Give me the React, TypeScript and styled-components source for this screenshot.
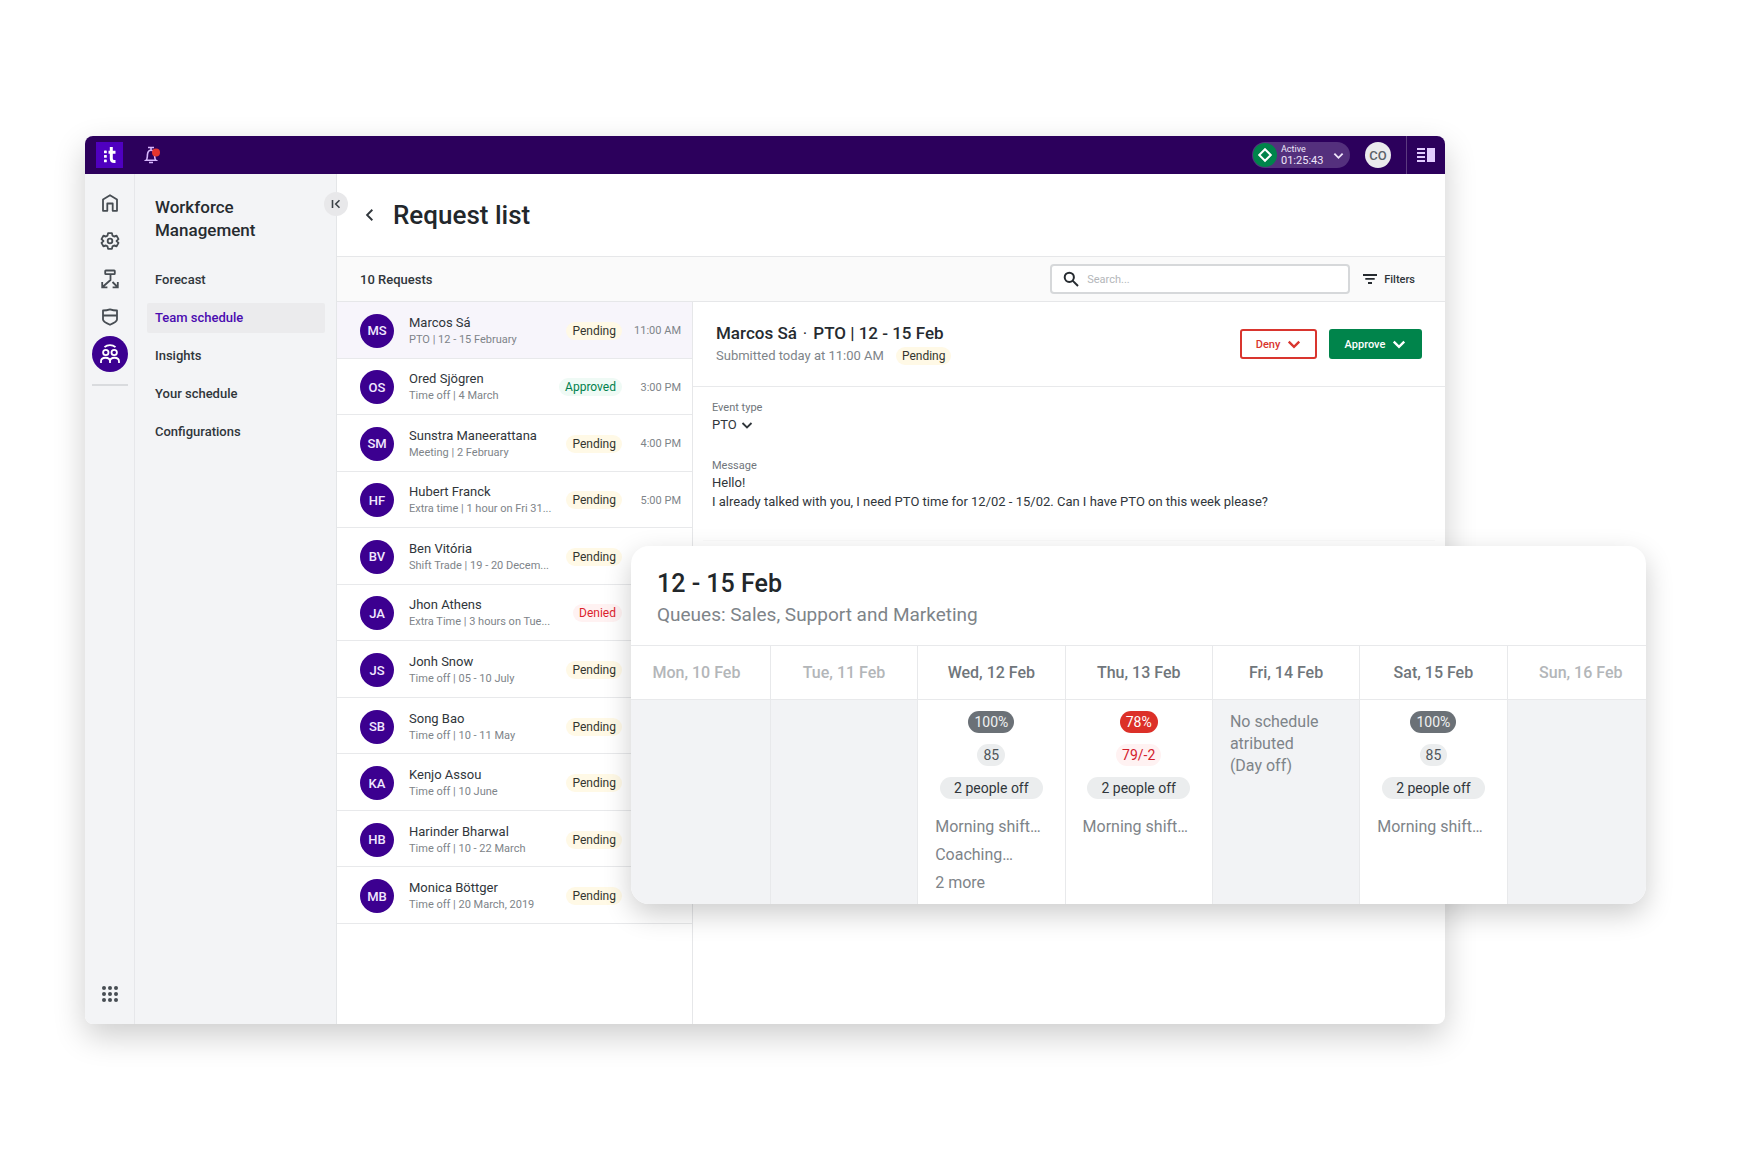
import React from "react";
import styled, { createGlobalStyle, css } from "styled-components";

const Global = createGlobalStyle`
  * { box-sizing: border-box; }
  body { margin: 0; background: #fff; font-family: Roboto, "Noto Sans", sans-serif; color: #30363b; }
  button, input, select { font-family: inherit; color: inherit; }
  h1, h2, p, ul { margin: 0; padding: 0; }
  ul { list-style: none; }
`;

const Stage = styled.div`
  position: relative;
  min-height: 100vh;
  padding: 136px 295px 136px 85px;
`;

const AppWindow = styled.div`
  display: flex;
  flex-direction: column;
  min-height: 888px;
  background: #fff;
  border-radius: 8px;
  overflow: hidden;
  box-shadow: 0 12px 32px rgba(0, 0, 0, 0.2);
`;

const TopBar = styled.header`
  display: flex;
  align-items: center;
  height: 38px;
  padding-left: 11px;
  background: #2c005c;
`;

const IconButton = styled.button`
  display: grid;
  place-items: center;
  padding: 0;
  border: 0;
  background: none;
  cursor: pointer;
`;

const Logo = styled.a`
  display: grid;
  margin-right: 20px;
`;

const StatusButton = styled.button`
  display: flex;
  align-items: center;
  width: 98px;
  height: 26px;
  margin-left: auto;
  padding: 0 6px 0 1px;
  border: 0;
  border-radius: 13px;
  background: #54307d;
  color: #efe6fa;
  text-align: left;
`;

const StatusText = styled.span`
  flex: 1;
  display: flex;
  flex-direction: column;
  margin-left: 4px;
  font-size: 9px;
  line-height: 11px;
`;

const StatusTime = styled.span`
  font-size: 11px;
`;

const UserButton = styled.button`
  width: 26px;
  height: 26px;
  margin: 0 15px;
  padding: 0;
  border: 0;
  border-radius: 50%;
  background: #ebebed;
  color: #5c6268;
  font-size: 13px;
  font-weight: 500;
`;

const PanelButton = styled(IconButton)`
  width: 39px;
  height: 38px;
  border-left: 1px solid #5c3b80;
`;

const Body = styled.div`
  flex: 1;
  display: flex;
`;

const Rail = styled.nav`
  display: flex;
  flex-direction: column;
  align-items: center;
  width: 50px;
  padding: 17px 0 18px 1px;
  background: #f3f4f6;
  border-right: 1px solid #e6e7ea;
  color: #474d53;
`;

const RailLink = styled.a<{ $active?: boolean }>`
  display: grid;
  place-items: center;
  width: 36px;
  height: ${(p) => (p.$active ? 36 : 24)}px;
  margin-bottom: ${(p) => (p.$active ? 12 : 14)}px;
  margin-top: ${(p) => (p.$active ? -7 : 0)}px;
  border-radius: 50%;
  color: ${(p) => (p.$active ? "#fff" : "#474d53")};
  background: ${(p) => (p.$active ? "#3c0090" : "none")};
`;

const RailRule = styled.div`
  width: 36px;
  height: 2px;
  background: #d9dbde;
`;

const AppsButton = styled(IconButton)`
  margin-top: auto;
  width: 24px;
  height: 24px;
`;

const Side = styled.nav`
  position: relative;
  width: 202px;
  padding: 22px 11px 0 12px;
  background: #f3f4f6;
  border-right: 1px solid #e4e6e8;
`;

const SideTitle = styled.h2`
  margin: 0 8px 23px;
  font-size: 17px;
  line-height: 23px;
  font-weight: 500;
  color: #262b30;
`;

const SideLink = styled.a<{ $active?: boolean }>`
  display: block;
  height: 30px;
  margin-bottom: 8px;
  padding: 0 8px;
  border-radius: 2px;
  font-size: 13px;
  line-height: 30px;
  font-weight: 500;
  text-decoration: none;
  color: ${(p) => (p.$active ? "#4a0cb0" : "#30363b")};
  background: ${(p) => (p.$active ? "#ebebed" : "none")};
`;

const Collapse = styled(IconButton)`
  position: absolute;
  top: 18px;
  right: -12px;
  width: 24px;
  height: 24px;
  border-radius: 50%;
  background: #e8e8ea;
`;

const Main = styled.main`
  flex: 1;
  min-width: 0;
  display: flex;
  flex-direction: column;
`;

const TitleBar = styled.div`
  display: flex;
  align-items: center;
  gap: 16px;
  height: 83px;
  padding: 0 0 0 26px;
  border-bottom: 1px solid #e6e7e9;
`;

const PageTitle = styled.h1`
  font-size: 26px;
  line-height: 32px;
  font-weight: 500;
  color: #22272b;
`;

const Toolbar = styled.div`
  display: flex;
  align-items: center;
  height: 45px;
  padding: 0 30px 0 23px;
  background: #fafafa;
  border-bottom: 1px solid #e6e7e9;
`;

const Count = styled.span`
  font-size: 13px;
  font-weight: 500;
`;

const SearchBox = styled.label`
  display: flex;
  align-items: center;
  gap: 8px;
  width: 300px;
  height: 30px;
  margin-left: auto;
  padding-left: 11px;
  border: 2px solid #d6d8da;
  border-radius: 4px;
  background: #fff;
`;

const SearchInput = styled.input`
  flex: 1;
  min-width: 0;
  padding: 0;
  border: 0;
  outline: 0;
  background: none;
  font-size: 11px;
  &::placeholder { color: #b4b7ba; }
`;

const FilterButton = styled.button`
  display: flex;
  align-items: center;
  gap: 7px;
  margin-left: 13px;
  padding: 0;
  border: 0;
  background: none;
  font-size: 11px;
  font-weight: 500;
`;

const Split = styled.div`
  flex: 1;
  display: flex;
`;

const ListPane = styled.div`
  width: 356px;
  border-right: 1px solid #e6e7e9;
`;

const RequestList = styled.ul`
  display: grid;
  grid-auto-rows: 1fr;
  height: 622px;
`;

const Row = styled.li<{ $active?: boolean }>`
  display: flex;
  align-items: center;
  padding: 2px 11px 0 23px;
  border-bottom: 1px solid #e8e9eb;
  background: ${(p) => (p.$active ? "#f7f5fb" : "#fff")};
`;

const Avatar = styled.span`
  display: grid;
  place-items: center;
  width: 34px;
  height: 34px;
  margin-right: 15px;
  border-radius: 50%;
  background: #3c0090;
  color: #f1e8ff;
  font-size: 13px;
  font-weight: 500;
`;

const Who = styled.div`
  flex: 1;
  min-width: 0;
  font-size: 13px;
  line-height: 17px;
  white-space: nowrap;
`;

const Detail = styled.p`
  font-size: 11px;
  line-height: 17px;
  color: #7e8489;
`;

const tones = {
  Pending: css`color: #33352f; background: #fff9e6;`,
  Approved: css`color: #00804c; background: #effaf5;`,
  Denied: css`color: #dc1f2c; background: #fff2f2;`,
};

const Tag = styled.span<{ $tone: keyof typeof tones }>`
  padding: 0 6px;
  border-radius: 9px;
  font-size: 12px;
  line-height: 18px;
  ${(p) => tones[p.$tone]}
`;

const Time = styled.time`
  min-width: 52px;
  margin-left: 7px;
  font-size: 11px;
  text-align: right;
  color: #7e8489;
`;

const DetailPane = styled.section`
  flex: 1;
  min-width: 0;
`;

const DetailHead = styled.div`
  display: flex;
  align-items: flex-start;
  gap: 12px;
  height: 85px;
  padding: 20px 23px 0 23px;
  border-bottom: 1px solid #e8e9eb;
`;

const DetailTitle = styled.h2`
  font-size: 17px;
  line-height: 22px;
  font-weight: 500;
  color: #262b30;
`;

const Dot = styled.span`
  margin: 0 6px;
  font-weight: 400;
`;

const Heading = styled.div`
  flex: 1;
`;

const Submitted = styled.p`
  display: flex;
  align-items: center;
  gap: 12px;
  font-size: 13px;
  line-height: 23px;
  color: #7e8489;
`;

const ActionButton = styled.button<{ $solid?: boolean }>`
  display: flex;
  align-items: center;
  justify-content: center;
  gap: 7px;
  width: ${(p) => (p.$solid ? 93 : 77)}px;
  height: 30px;
  margin-top: 7px;
  padding: 0;
  border: 2px solid ${(p) => (p.$solid ? "#00844b" : "#d9352e")};
  border-radius: 3px;
  background: ${(p) => (p.$solid ? "#00844b" : "#fff")};
  color: ${(p) => (p.$solid ? "#fff" : "#d9352e")};
  font-size: 11px;
  font-weight: 500;
`;

const Fields = styled.div`
  margin: 0 10px;
  padding: 13px 9px 5px;
  border-bottom: 1px solid #fafafa;
`;

const Field = styled.div`
  display: flex;
  flex-direction: column;
  margin-bottom: 24px;
`;

const FieldLabel = styled.label`
  font-size: 11px;
  line-height: 15px;
  color: #70767b;
`;

const SelectWrap = styled.span`
  display: flex;
  align-items: center;
  gap: 4px;
`;

const Select = styled.select`
  appearance: none;
  padding: 0;
  border: 0;
  background: none;
  font-size: 13px;
  line-height: 19px;
`;

const Message = styled.p`
  font-size: 13px;
  line-height: 19px;
`;

const Card = styled.section`
  position: absolute;
  top: 546px;
  left: 631px;
  right: 94px;
  overflow: hidden;
  border-radius: 18px;
  background: #fff;
  box-shadow: 0 10px 28px rgba(0, 0, 0, 0.2);
`;

const CardHead = styled.div`
  padding: 22px 26px 16px;
`;

const CardTitle = styled.h2`
  font-size: 25px;
  line-height: 32px;
  font-weight: 500;
  color: #22272b;
`;

const CardSub = styled.p`
  font-size: 19px;
  line-height: 29px;
  color: #7e8489;
`;

const Week = styled.table`
  width: calc(100% + 17px);
  margin: 0 -9px 0 -8px;
  table-layout: fixed;
  border-collapse: collapse;
`;

const DayHead = styled.th<{ $muted?: boolean }>`
  height: 54px;
  padding: 0;
  border: solid #e8e9eb;
  border-width: 1px 1px 1px 0;
  font-size: 16px;
  font-weight: 500;
  color: ${(p) => (p.$muted ? "#b3b6b9" : "#70767b")};
`;

const DayCell = styled.td<{ $off?: boolean }>`
  height: 204px;
  padding: 11px 17px 0;
  border-right: 1px solid #e8e9eb;
  vertical-align: top;
  font-size: 16px;
  line-height: 22px;
  color: #7e8489;
  background: ${(p) => (p.$off ? "#f2f3f5" : "#fff")};
`;

const Pills = styled.div`
  display: flex;
  flex-direction: column;
  align-items: center;
  gap: 11px;
  margin-bottom: 14px;
`;

const pillTones = {
  dark: css`color: #f0f1f2; background: #6b7177;`,
  red: css`color: #fff; background: #dc3028;`,
  grey: css`color: #4e5459; background: #ebedee;`,
  rose: css`color: #d3202c; background: #fff2f2;`,
  people: css`padding: 0 14px; color: #30363b; background: #ebedee;`,
};

const Pill = styled.span<{ $tone: keyof typeof pillTones }>`
  padding: 0 6px;
  border-radius: 11px;
  font-size: 14px;
  line-height: 22px;
  white-space: nowrap;
  ${(p) => pillTones[p.$tone]}
`;

const Shift = styled.p`
  line-height: 28px;
  white-space: nowrap;
`;

const Chevron = ({ size = 14, dir = "down", width = 2 }: { size?: number; dir?: "down" | "left"; width?: number }) => (
  <svg width={size} height={size} viewBox="0 0 12 12" fill="none" stroke="currentColor" strokeWidth={width}>
    <path d={dir === "down" ? "M1.5 4 6 8.500l4.500-4.500" : "M8 1.500 3.500 6 8 10.500"} />
  </svg>
);

const HomeIcon = () => (
  <svg width="20" height="20" viewBox="0 0 20 20" fill="none" stroke="currentColor" strokeWidth="1.8" strokeLinejoin="round">
    <path d="M3 6.500 10 2.200l7 4.300v11.300h-4.300v-7.300H7.300v7.300H3z" />
  </svg>
);

const GearIcon = () => (
  <svg width="20" height="20" viewBox="0 0 24 24" fill="none" stroke="currentColor" strokeWidth="2.200" strokeLinejoin="round">
    <path d="M9.700 2.500h4.600l.7 3 1.900 1.100 3-.9 2.300 4-2.300 2.100v.4l2.300 2.100-2.300 4-3-.9-1.900 1.100-.7 3H9.700l-.7-3-1.900-1.100-3 .9-2.300-4 2.300-2.100v-.4L1.800 9.700l2.300-4 3 .9L9 5.500z" />
    <circle cx="12" cy="12" r="2.800" />
  </svg>
);

const FlowIcon = () => (
  <svg width="20" height="20" viewBox="0 0 20 20" fill="none" stroke="currentColor" strokeWidth="1.800">
    <rect x="5.200" y="1.500" width="9.600" height="3.600" rx=".6" />
    <path d="M10.500 5v6L2.500 18M12.500 13l5 5M2.200 13v5.300h5.200M17.800 13v5.300h-5.200" />
  </svg>
);

const ShieldIcon = () => (
  <svg width="20" height="20" viewBox="0 0 20 20" fill="none" stroke="currentColor" strokeWidth="1.800" strokeLinejoin="round">
    <path d="M3 3.500c3 0 4.500-.3 7-1.200 2.500.9 4 1.200 7 1.200v9c0 1.500-3 3.500-7 5.300-4-1.800-7-3.800-7-5.300zM3 8.500h14" />
  </svg>
);

const TeamIcon = () => (
  <svg width="22" height="22" viewBox="0 0 22 22" fill="none" stroke="currentColor" strokeWidth="1.800">
    <circle cx="6.800" cy="9.500" r="2.700" />
    <circle cx="15.200" cy="9.500" r="2.700" />
    <path d="M5.500 4.200C8.500 1.400 13.500 1.400 16.500 4.200M2 20v-1.500c0-5 9-5 9 0V20M11 20v-1.500c0-5 9-5 9 0V20" />
  </svg>
);

const people: { name: string; initials: string; detail: string; status: keyof typeof tones; time: string }[] = [
  { name: "Marcos Sá", initials: "MS", detail: "PTO | 12 - 15 February", status: "Pending", time: "11:00 AM" },
  { name: "Ored Sjögren", initials: "OS", detail: "Time off | 4 March", status: "Approved", time: "3:00 PM" },
  { name: "Sunstra Maneerattana", initials: "SM", detail: "Meeting | 2 February", status: "Pending", time: "4:00 PM" },
  { name: "Hubert Franck", initials: "HF", detail: "Extra time | 1 hour on Fri 31...", status: "Pending", time: "5:00 PM" },
  { name: "Ben Vitória", initials: "BV", detail: "Shift Trade | 19 - 20 Decem...", status: "Pending", time: "" },
  { name: "Jhon Athens", initials: "JA", detail: "Extra Time | 3 hours on Tue...", status: "Denied", time: "" },
  { name: "Jonh Snow", initials: "JS", detail: "Time off | 05 - 10 July", status: "Pending", time: "" },
  { name: "Song Bao", initials: "SB", detail: "Time off | 10 - 11 May", status: "Pending", time: "" },
  { name: "Kenjo Assou", initials: "KA", detail: "Time off | 10 June", status: "Pending", time: "" },
  { name: "Harinder Bharwal", initials: "HB", detail: "Time off | 10 - 22 March", status: "Pending", time: "" },
  { name: "Monica Böttger", initials: "MB", detail: "Time off | 20 March, 2019", status: "Pending", time: "" },
];

type Day = { label: string; muted?: boolean; off?: boolean; load?: string; staff?: string; low?: boolean; shifts?: string[]; note?: string[] };

const days: Day[] = [
  { label: "Mon, 10 Feb", muted: true, off: true },
  { label: "Tue, 11 Feb", muted: true, off: true },
  { label: "Wed, 12 Feb", load: "100%", staff: "85", shifts: ["Morning shift…", "Coaching…", "2 more"] },
  { label: "Thu, 13 Feb", load: "78%", staff: "79/-2", low: true, shifts: ["Morning shift…"] },
  { label: "Fri, 14 Feb", off: true, note: ["No schedule", "atributed", "(Day off)"] },
  { label: "Sat, 15 Feb", load: "100%", staff: "85", shifts: ["Morning shift…"] },
  { label: "Sun, 16 Feb", muted: true, off: true },
];

export default function App() {
  return (
    <Stage>
      <Global />
      <AppWindow>
        <TopBar>
          <Logo href="#" aria-label="Home">
            <svg width="27" height="26" viewBox="0 0 27 26">
              <rect width="27" height="26" fill="#4f00c0" />
              <g fill="#fff">
                <rect x="8" y="8.500" width="2.800" height="2.800" rx=".6" />
                <rect x="8" y="13" width="2.800" height="2.800" rx=".6" />
                <rect x="8" y="17.500" width="2.800" height="2.800" rx=".6" />
              </g>
              <path d="M15.300 5v11.500q0 3 3 3h1.200M12.500 10.200h7" fill="none" stroke="#fff" strokeWidth="3" />
            </svg>
          </Logo>
          <IconButton aria-label="Notifications">
            <svg width="18" height="20" viewBox="0 0 18 20" fill="none" stroke="#d9b8ff" strokeWidth="1.600">
              <path d="M5 2.500h6M8 2.700v2.300M3 15.300c1.500-1.200 1.200-2.500 1.500-6 .5-5.500 6.500-5.500 7 0 .3 3.500 0 4.800 1.500 6zM6 17.500h4" />
              <circle cx="13" cy="7.500" r="4" fill="#e5342e" stroke="none" />
            </svg>
          </IconButton>
          <StatusButton>
            <svg width="24" height="24" viewBox="0 0 24 24">
              <circle cx="12" cy="12" r="12" fill="#00844b" />
              <path d="M12 6.200 17.800 12 12 17.800 6.200 12z" fill="none" stroke="#fff" strokeWidth="2" />
            </svg>
            <StatusText>
              Active
              <StatusTime>01:25:43</StatusTime>
            </StatusText>
            <Chevron size={11} />
          </StatusButton>
          <UserButton>CO</UserButton>
          <PanelButton aria-label="Toggle panel">
            <svg width="18" height="14" viewBox="0 0 18 14" fill="#e3ccff">
              <path d="M0 0h8v2H0zM0 4h8v2H0zM0 8h8v2H0zM0 12h8v2H0zM10 0h8v14h-8z" />
            </svg>
          </PanelButton>
        </TopBar>
        <Body>
          <Rail>
            <RailLink href="#" aria-label="Home"><HomeIcon /></RailLink>
            <RailLink href="#" aria-label="Settings"><GearIcon /></RailLink>
            <RailLink href="#" aria-label="Flows"><FlowIcon /></RailLink>
            <RailLink href="#" aria-label="Security"><ShieldIcon /></RailLink>
            <RailLink href="#" aria-label="Workforce" $active><TeamIcon /></RailLink>
            <RailRule />
            <AppsButton aria-label="Apps">
              <svg width="16" height="16" viewBox="0 0 16 16" fill="#474d53">
                {[2, 8, 14].map((y) => [2, 8, 14].map((x) => <circle key={x + "-" + y} cx={x} cy={y} r="2" />))}
              </svg>
            </AppsButton>
          </Rail>
          <Side>
            <SideTitle>Workforce Management</SideTitle>
            <SideLink href="#">Forecast</SideLink>
            <SideLink href="#" $active>Team schedule</SideLink>
            <SideLink href="#">Insights</SideLink>
            <SideLink href="#">Your schedule</SideLink>
            <SideLink href="#">Configurations</SideLink>
            <Collapse aria-label="Collapse menu">
              <svg width="10" height="10" viewBox="0 0 10 10" fill="none" stroke="#3c4247" strokeWidth="1.600">
                <path d="M1.500 1v8M8.500 1.200 4.700 5l3.800 3.800" />
              </svg>
            </Collapse>
          </Side>
          <Main>
            <TitleBar>
              <IconButton aria-label="Back"><Chevron dir="left" width={1.6} /></IconButton>
              <PageTitle>Request list</PageTitle>
            </TitleBar>
            <Toolbar>
              <Count>10 Requests</Count>
              <SearchBox>
                <svg width="16" height="16" viewBox="0 0 16 16" fill="none" stroke="#262b30" strokeWidth="2">
                  <circle cx="6.300" cy="6.300" r="4.600" />
                  <path d="M9.600 9.600 15 15" />
                </svg>
                <SearchInput aria-label="Search" placeholder="Search..." />
              </SearchBox>
              <FilterButton>
                <svg width="14" height="10" viewBox="0 0 14 10" fill="#262b30">
                  <path d="M0 0h14v2H0zM2.300 4h9.400v1.800H2.300zM5 8h4v2H5z" />
                </svg>
                Filters
              </FilterButton>
            </Toolbar>
            <Split>
              <ListPane>
                <RequestList>
                  {people.map((p, i) => (
                    <Row key={p.name} $active={i === 0}>
                      <Avatar>{p.initials}</Avatar>
                      <Who>
                        {p.name}
                        <Detail>{p.detail}</Detail>
                      </Who>
                      <Tag $tone={p.status}>{p.status}</Tag>
                      <Time>{p.time}</Time>
                    </Row>
                  ))}
                </RequestList>
              </ListPane>
              <DetailPane>
                <DetailHead>
                  <Heading>
                    <DetailTitle>Marcos Sá<Dot>·</Dot>PTO | 12 - 15 Feb</DetailTitle>
                    <Submitted>
                      Submitted today at 11:00 AM <Tag $tone="Pending">Pending</Tag>
                    </Submitted>
                  </Heading>
                  <ActionButton>Deny <Chevron /></ActionButton>
                  <ActionButton $solid>Approve <Chevron /></ActionButton>
                </DetailHead>
                <Fields>
                  <Field>
                    <FieldLabel htmlFor="event-type">Event type</FieldLabel>
                    <SelectWrap>
                      <Select id="event-type"><option>PTO</option></Select>
                      <Chevron size={12} width={1.8} />
                    </SelectWrap>
                  </Field>
                  <Field>
                    <FieldLabel as="span">Message</FieldLabel>
                    <Message>Hello!</Message>
                    <Message>I already talked with you, I need PTO time for 12/02 - 15/02. Can I have PTO on this week please?</Message>
                  </Field>
                </Fields>
              </DetailPane>
            </Split>
          </Main>
        </Body>
      </AppWindow>
      <Card>
        <CardHead>
          <CardTitle>12 - 15 Feb</CardTitle>
          <CardSub>Queues: Sales, Support and Marketing</CardSub>
        </CardHead>
        <Week>
          <thead>
            <tr>{days.map((d) => <DayHead key={d.label} $muted={d.muted}>{d.label}</DayHead>)}</tr>
          </thead>
          <tbody>
            <tr>
              {days.map((d) => (
                <DayCell key={d.label} $off={d.off}>
                  {d.load && (
                    <Pills>
                      <Pill $tone={d.low ? "red" : "dark"}>{d.load}</Pill>
                      <Pill $tone={d.low ? "rose" : "grey"}>{d.staff}</Pill>
                      <Pill $tone="people">2 people off</Pill>
                    </Pills>
                  )}
                  {d.shifts?.map((s) => <Shift key={s}>{s}</Shift>)}
                  {d.note?.map((n) => <p key={n}>{n}</p>)}
                </DayCell>
              ))}
            </tr>
          </tbody>
        </Week>
      </Card>
    </Stage>
  );
}
